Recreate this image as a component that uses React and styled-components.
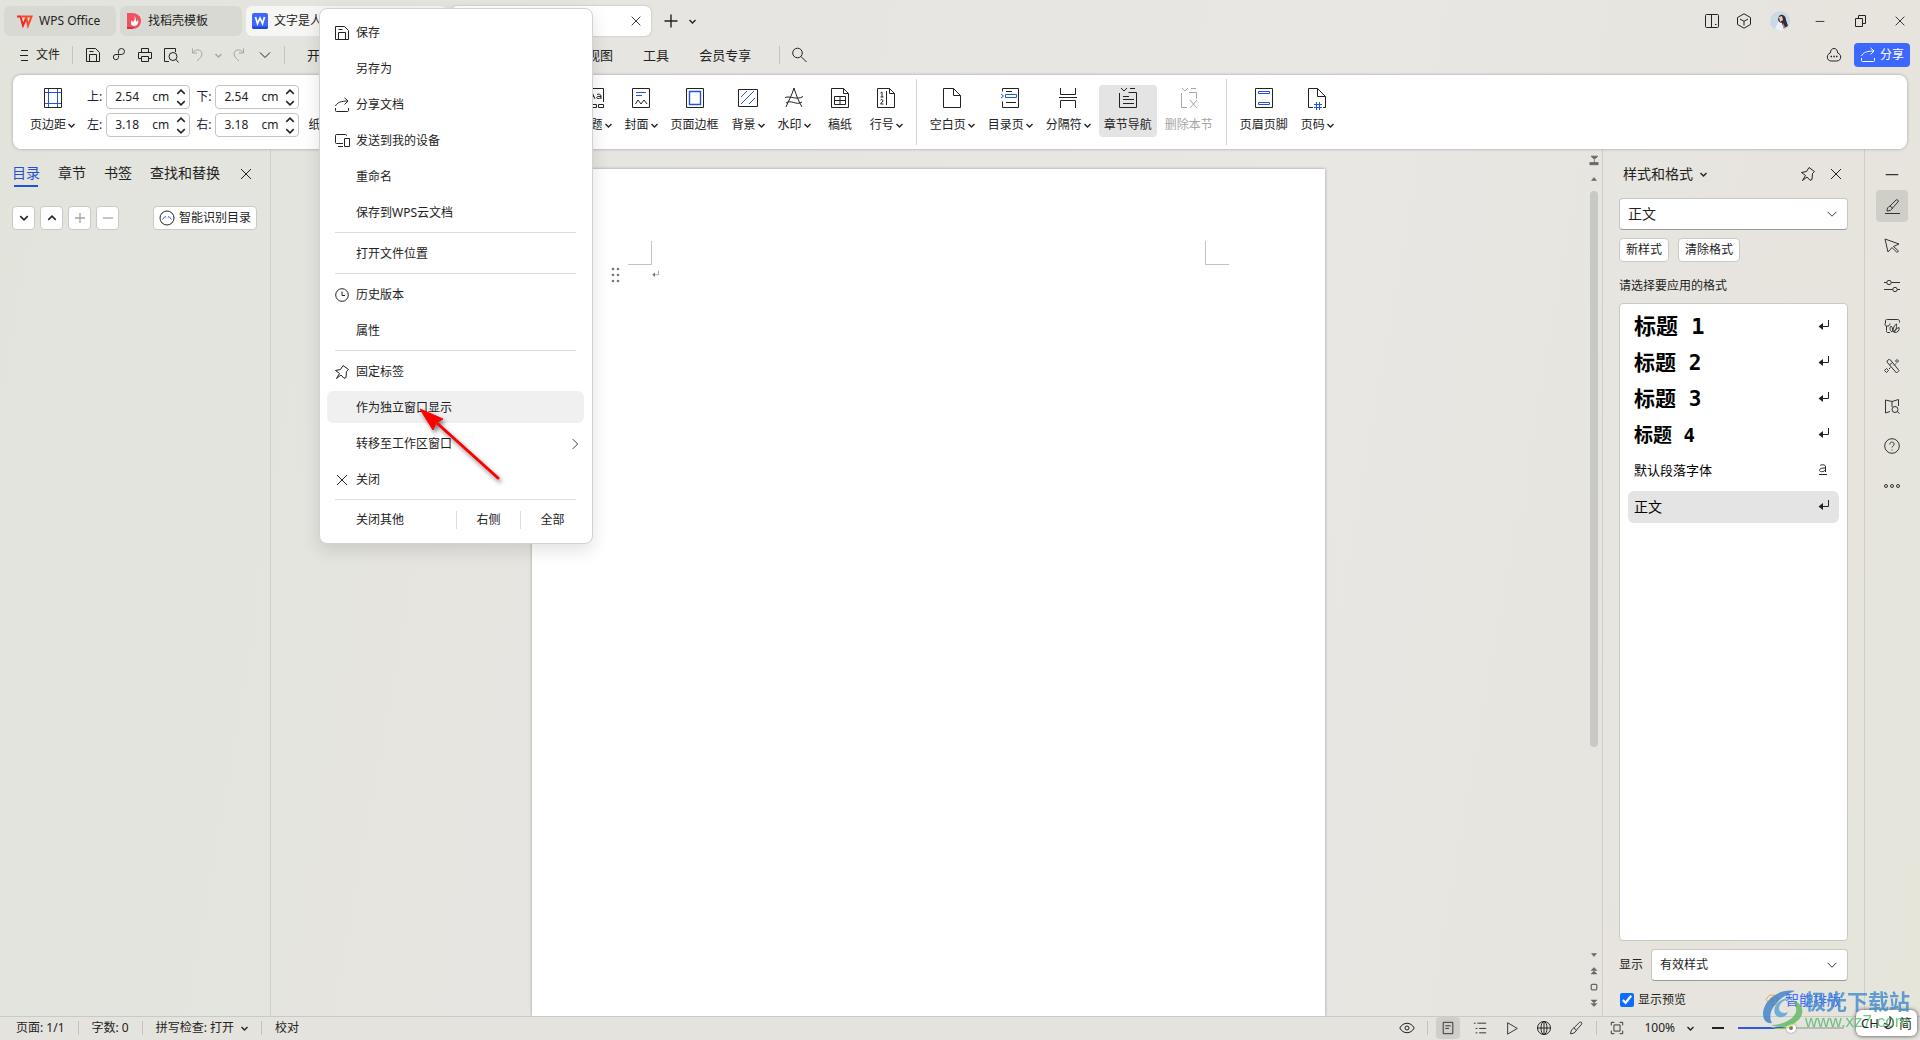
import { useState } from "react";
import styled, { createGlobalStyle, css } from "styled-components";

const icons = {
	wps: (
		<g strokeWidth="2" strokeLinejoin="miter">
			<path d="M0 3.500h3.500L6 12.500 9 5.500" stroke="#f0262a" />
			<path d="M4.500 3.500H9l2 9 3.500-9H9" stroke="#fb4a24" />
		</g>
	),
	docer: (
		<g stroke="none">
			<path d="M1 0h5c5 0 9 3 9 8s-4 8-9 8H1z" fill="#f05260" />
			<path d="M1 14h8l-3 2H1z" fill="#d5303f" />
			<path d="M8 3c2 3 0 5-1 6 0 0-1-1-1-2-2 3-1 6 2 6s5-3 4-6l-2 2c0-2 0-5-2-6z" fill="#fff" />
		</g>
	),
	writer: (
		<g>
			<rect width="16" height="16" rx="2" fill="#3d68ff" stroke="none" />
			<path d="M0 13.500h16v.5a2 2 0 0 1-2 2H2a2 2 0 0 1-2-2z" fill="#1e48d8" stroke="none" />
			<path d="M3.500 4l2 6.500L8 5l2.500 5.500 2-6.500" stroke="#fff" strokeWidth="1.700" />
		</g>
	),
	close: <path d="M3 3l10 10M13 3L3 13" />,
	plus: <path d="M8 1.500v13M1.500 8h13" strokeWidth="1.4" />,
	thinPlus: <path d="M8 3v10M3 8h10" strokeWidth="1.3" />,
	minus: <path d="M3 8h10" strokeWidth="1.3" />,
	dash: <path d="M3 8.500h10" />,
	thickMinus: <path d="M2 8h12" strokeWidth="2" />,
	restore: <path d="M3.500 5.500h7v8h-7zM6.500 5.500v-3h7v8h-3" />,
	down: <path d="M3 5.500l5 5 5-5" />,
	up: <path d="M3 10.500l5-5 5 5" />,
	right: <path d="M5.500 2.500L11 8l-5.500 5.500" />,
	lines: <path d="M3 3.500h7M2 8.500h8M3 13.500h7" />,
	save: <path d="M1.500 1.500h9l4 4v9h-13zM4.500 14.500v-7h7v7M4.500 4.500h4" />,
	link: <path d="M7.500 6.500V4.300a3 3 0 1 1 3 3.200H5a2.600 2.600 0 1 0 2.500 3V8.500" />,
	print: <path d="M4.500 5.500v-4h7v4M4.500 11.500h-3v-6h13v6h-3M4.500 9.500h7v5h-7z" />,
	preview: (
		<g>
			<path d="M6 14.500H1.500v-13h11V5" />
			<circle cx="10" cy="9.500" r="4" />
			<path d="M13 12.500l2.500 3" />
		</g>
	),
	undo: <path d="M3.500 1.500v4.500H8M3.500 6C7 1 13 2.500 13 7c0 3-3 5-5 7" />,
	redo: <path d="M12.500 1.500v4.500H8M12.500 6C9 1 3 2.500 3 7c0 3 3 5 5 7" />,
	search: (
		<g>
			<circle cx="6.500" cy="6" r="4.800" />
			<path d="M10 9.500l5.500 5.500" />
		</g>
	),
	sidePanel: <path d="M2.500 1.500h11a1 1 0 0 1 1 1v11a1 1 0 0 1-1 1h-11a1 1 0 0 1-1-1v-11a1 1 0 0 1 1-1zM7.500 2v12M11 11.500h1.500" />,
	cube: <path d="M8 .8L14.500 4.500v7L8 15.200 1.500 11.500v-7zM4 6L8 8.300 12 6M8 8.300v4.200" />,
	cloud: (
		<g>
			<path d="M4.300 6C4.500 3 6 1.500 8 1.500S11.500 3 11.700 6c2 .8 3 2.200 3 4 0 2.500-1.700 4-4 4H5.300c-2.300 0-4-1.500-4-4 0-1.800 1-3.200 3-4z" />
			<path d="M4.500 9.500h1.500M7.300 9.500h1.500M10 9.500h1.500" strokeWidth="1.500" />
		</g>
	),
	share: <path d="M1.500 9C3 5.500 7 4 14 4M10.500.8L14 4l-3.500 3.500M1.500 11v2.500a1 1 0 0 0 1 1h11a1 1 0 0 0 1-1V11" />,
	devices: <path d="M9 10.500H2.500a1 1 0 0 1-1-1v-7a1 1 0 0 1 1-1h9a1 1 0 0 1 1 1V3M4 13.500h5M10.500 5.500h5v8h-5z" />,
	clock: (
		<g>
			<circle cx="8" cy="8" r="6.300" />
			<path d="M8 4.500V8.500h3" />
		</g>
	),
	pin: <path d="M9 1.500l5.500 4-2 2-.5 6-2 .8L7 11l-4.500 3.500L5.500 9.500 1.500 6.500l5-1z" />,
	face: (
		<g>
			<circle cx="8" cy="8" r="7" />
			<path d="M3.500 9.500l2.500-3 1.200 1M12.500 9.500L10 6.500 8.800 7.500" stroke="#2a5bd8" />
		</g>
	),
	brush: <path d="M1 15.500h15M3 13c0-3 1-4 3-5l6-6c1-1 3 .5 2 2l-5.500 6C7.500 12 6 13 3 13zM6 8l3 2.500" />,
	cursor: <path d="M1 1l14 5-5.500 2.500 5 4.500-1.500 1.500-5-5L4 14z" />,
	sliders: (
		<g>
			<circle cx="5" cy="4.500" r="2.200" />
			<circle cx="11" cy="11.500" r="2.200" />
			<path d="M0 4.500h2.800M7.200 4.500H16M0 11.500h8.800M13.200 11.500H16" />
		</g>
	),
	gallery: <path d="M6 14.500H3.500c-1 0-1-1-1-2V8C1 8 .5 6 1.500 5V2.500c0-1 1-1 2-1h10c2 0 2 1 2 3M2.500 8c2 .5 3.500-.5 3.500-2.500M8 14c-3-2-2-5-1-6 2 2 2 4 1 6zm1.500 0c-1-4 1-7 3-8 0 4 0 6-3 8zm1 .5c0-3 2-4 4.500-5 .5 3-1 5-4.500 5z" />,
	tools: <path d="M3 4a2.200 2.200 0 0 1 3.500-2l8.500 10.500-2.500 2.500zM5.500 7L8.500 4.500M13 1.500l1.500 1.500L13 4.500 11.500 3zM12 5.500l-2 2M2.500 10.500l2 2-2 2-2-2zM5 11l1.500-1.500" />,
	book: (
		<g>
			<path d="M6 13.500L1.500 15V2L8 3.500 14.500 1.500V8M8 3.500V9" />
			<circle cx="11" cy="11.500" r="3" />
			<path d="M13.200 13.500l2.300 2" />
		</g>
	),
	help: (
		<g>
			<circle cx="8" cy="8" r="7.300" />
			<path d="M5.800 6.500C5.800 3 10.300 3.500 10.200 6.300 10 8 8 8 8 9.500M8 11.500v1" />
		</g>
	),
	more: (
		<g>
			<circle cx="2" cy="8" r="1.500" />
			<circle cx="8" cy="8" r="1.500" />
			<circle cx="14" cy="8" r="1.500" />
		</g>
	),
	enter: <path d="M13.500 1v6.500H5" />,
	letter: <path d="M5 2.500c1.500-1 5.500-1.500 5.500 1.500v5M10.500 5C7 5 4.500 5.500 4.500 7.300s4 2.200 6-.6M4 11.500h8" />,
	eye: (
		<g>
			<path d="M.8 8C4 1.700 12 1.700 15.200 8 12 14.300 4 14.300.8 8z" />
			<circle cx="8" cy="8" r="2" />
		</g>
	),
	page: <path d="M2.500 1.500h11v13h-11zM5 5.500h6M5 8.500h4" />,
	outline: <path d="M1 2.500h2M5 2.500h10M3 8.500h2M7 8.500h8M3 13.500h2M7 13.500h8" />,
	play: <path d="M3 2l11 6.500L3 15z" />,
	globe: (
		<g>
			<circle cx="8" cy="8" r="6.500" />
			<ellipse cx="8" cy="8" rx="3" ry="6.500" />
			<path d="M8 1.500v13M1.500 8h13" />
		</g>
	),
	pen: <path d="M1.500 14.500c1-1 .5-3 1.500-4.500l2.500-2L12 1.500c2-1.500 3 1 2.500 2L8.500 10.500C7 14 4 14.500 1.500 14.500zM5.500 8L8.500 10.500" />,
	fit: <path d="M1.500 5V1.500H5M11 1.500h3.500V5M14.500 11v3.500H11M5 14.500H1.500V11M4.500 4.500h7v7h-7z" />,
	hexS: <path d="M5 2.500h6l4 5-3 6H7M5 2.500L1 7.500l3 3M10 5.500H7l-1 1 4 2-1 1.500H6" />,
	triUp: <path d="M3 11l5-6 5 6z" fill="#666" />,
	triDown: <path d="M3 5l5 6 5-6z" fill="#666" />,
	dblUp: <path d="M2 7l6-6 6 6zM2 14l6-6 6 6z" fill="#666" />,
	dblDown: <path d="M2 2l6 6 6-6zM2 9l6 6 6-6z" fill="#666" />,
	ruler: <path d="M4 1.500h9l-3 3H7zM2.500 13v-3h11v3zM8.500 5v5" fill="#666" />,
	dot: <rect x="2.500" y="2.500" width="11" height="11" rx="2" strokeWidth="2.500" />,
};

const ribbonIcons = {
	margins: (
		<g>
			<path d="M3.500 2.500h17v19h-17z" />
			<path d="M7.500 3v18M16.500 3v18M4 6.500h16M4 17.500h16" stroke="#2354d8" />
		</g>
	),
	orient: <path d="M4.500 2.500h10v19h-10zM14.500 10.500h6v11h-6" />,
	size: <path d="M3.500 2.500h17v19h-17zM7.500 7v10M10 6.500h7" />,
	columns: <path d="M3.500 4.500h7M3.500 9.500h7M3.500 14.500h7M3.500 19.500h7M13.500 4.500h7M13.500 9.500h7M13.500 14.500h7M13.500 19.500h7" />,
	direction: <path d="M4.500 20.500l5-16 5 16M6.500 14.500h6M18.500 4v16M16.500 18l2 2 2-2" />,
	theme: (
		<g>
			<path d="M20.500 16V2.500h-17V16M8.500 18.500h5v3h-5zM15.500 18.500h5v3h-5zM3.500 18.500h3v3h-3z" />
			<path d="M6 13l3-7 3 7M7 10.500h4M14 8.500c2-1 4 0 4 1.500v3M18 10.500c-5-1-5 2-3 2 1 0 2 0 3-1" />
		</g>
	),
	cover: (
		<g>
			<path d="M3.500 2.500h17v19h-17zM6.500 18l2.500-4 3 4 3-4 3 4" />
			<path d="M7 6.500h10M7 9.500h6" stroke="#2354d8" />
		</g>
	),
	border: (
		<g>
			<path d="M3.500 2.500h17v19h-17z" />
			<path d="M6.500 5.500h11v13h-11z" stroke="#2354d8" strokeWidth="1.400" />
		</g>
	),
	background: (
		<g>
			<path d="M2.500 3.500h19v17h-19z" />
			<path d="M5 11l6-6M5 18L18 5M13 18l6-6" stroke="#2354d8" />
		</g>
	),
	watermark: <path d="M4 21c2-5 6-12 8-19 2 7 5 14 8 19M3 11.500c5-2 12 3 18-1M4 17c5-4 10 3 16-1" />,
	grid: <path d="M3.500 2.500h12l5 5v14h-17zM15.500 2.500v5h5M6.500 10.500h11v8h-11zM6.500 14.500h11M12 10.500v8" />,
	lineNo: <path d="M3.500 2.500h12l5 5v14h-17zM15.500 2.500v5h5M12.500 5v14M6.500 7l1.500-1v5M6.500 11h3M6.500 14c1-1 2.500-.5 2.500 1l-2.500 3h3" />,
	blank: <path d="M3.500 2.500h10l7 7v12h-17zM13.500 2.500v7h7" />,
	toc: (
		<g>
			<path d="M4.500 5.500v-3h16v19h-16v-6M8 5.500h6M8 16.500h10" />
			<path d="M7.500 8.500h11v3h-11zM3 8l2.500 2L3 12" stroke="#2354d8" />
		</g>
	),
	breaks: <path d="M4.500 2v6.500h15V2M3 11.500h18M4.500 22v-7.500h15V22" />,
	nav: <path d="M5 2l3 3 3-3M14 2.500h5M3.500 7v14.500h17v-15h-8M7 10.500h6M7 13.500h11M7 17.500h11" />,
	removeSection: <path d="M5 2l3 3 3-3M14 2.500h5M12 6.500h7.500v6M4.500 7v14.500H10M13 14l7 8M20 14l-7 8" />,
	headerFooter: (
		<g>
			<path d="M3.500 2.500h17v19h-17z" />
			<path d="M6.500 5.500h11v2h-11zM6.500 16.500h11v2h-11z" stroke="#2354d8" />
		</g>
	),
	pageNo: (
		<g>
			<path d="M8 21.500H3.500v-19h9l8 8v11H18M12.500 2.500v8h8" />
			<path d="M11.500 16v8M14.500 16v8M9 18.500h8M9 21.500h8" stroke="#2354d8" />
		</g>
	),
};

const Icon = ({ name, size = 16 }) => (
	<Svg $size={size} viewBox="0 0 16 16" aria-hidden="true">
		{icons[name]}
		{name === "enter" && <path d="M8 4v7L3.500 7.500z" fill="currentColor" stroke="none" />}
	</Svg>
);

const quickTools = ["save", "link", "print", "preview"];
const ribbonTabs = ["开始", "插入", "页面", "引用", "审阅", "视图", "工具", "会员专享"];

const paperGroup = [
	{ icon: "orient", label: "纸张方向", menu: true },
	{ icon: "size", label: "纸张大小", menu: true },
	{ icon: "columns", label: "分栏", menu: true },
	{ icon: "direction", label: "文字方向", menu: true },
];
const themeGroup = [
	{ icon: "theme", label: "主题", menu: true },
	{ icon: "cover", label: "封面", menu: true },
	{ icon: "border", label: "页面边框" },
	{ icon: "background", label: "背景", menu: true },
	{ icon: "watermark", label: "水印", menu: true },
	{ icon: "grid", label: "稿纸" },
	{ icon: "lineNo", label: "行号", menu: true },
];
const sectionGroup = [
	{ icon: "blank", label: "空白页", menu: true },
	{ icon: "toc", label: "目录页", menu: true },
	{ icon: "breaks", label: "分隔符", menu: true },
	{ icon: "nav", label: "章节导航", active: true },
	{ icon: "removeSection", label: "删除本节", disabled: true },
];
const headerGroup = [
	{ icon: "headerFooter", label: "页眉页脚" },
	{ icon: "pageNo", label: "页码", menu: true },
];

const tabMenu = [
	{ icon: "save", label: "保存" },
	{ label: "另存为" },
	{ icon: "share", label: "分享文档" },
	{ icon: "devices", label: "发送到我的设备" },
	{ label: "重命名" },
	{ label: "保存到WPS云文档" },
	null,
	{ label: "打开文件位置" },
	null,
	{ icon: "clock", label: "历史版本" },
	{ label: "属性" },
	null,
	{ icon: "pin", label: "固定标签" },
	{ label: "作为独立窗口显示", active: true },
	{ label: "转移至工作区窗口", sub: true },
	{ icon: "close", label: "关闭" },
	null,
];

const styleList = [
	{ name: "标题 1", size: 22, weight: 600, mark: "enter" },
	{ name: "标题 2", size: 21, weight: 700, mark: "enter" },
	{ name: "标题 3", size: 21, weight: 600, mark: "enter" },
	{ name: "标题 4", size: 19, weight: 700, mark: "enter" },
	{ name: "默认段落字体", size: 13, weight: 400, mark: "letter" },
	{ name: "正文", size: 14, weight: 400, mark: "enter", active: true },
];

const sideTools = ["brush", "cursor", "sliders", "gallery", "tools", "book", "help", "more"];

const RibbonItem = ({ item }) => (
	<RibbonButton $active={item.active} disabled={item.disabled}>
		<Svg $size={24} viewBox="0 0 24 24" aria-hidden="true">
			{ribbonIcons[item.icon]}
		</Svg>
		<RibbonLabel>
			{item.label}
			{item.menu && <Caret />}
		</RibbonLabel>
	</RibbonButton>
);

const RibbonGroup = ({ items }) => (
	<Group>
		{items.map((item) => (
			<RibbonItem key={item.label} item={item} />
		))}
	</Group>
);

const Caret = () => (
	<CaretSvg viewBox="0 0 7 5" aria-hidden="true">
		<path d="M.5 1l3 3 3-3" />
	</CaretSvg>
);

const MarginField = ({ label, start }) => {
	const [value, setValue] = useState(start);
	const step = (by) => setValue((Number(value) + by).toFixed(2));
	return (
		<FieldLabel>
			{label}:
			<Spin>
				<SpinInput value={value} onChange={(e) => setValue(e.target.value)} />
				<Unit>cm</Unit>
				<SpinButtons>
					<SpinButton aria-label="增加" onClick={() => step(0.1)}>
						<Icon name="up" size={12} />
					</SpinButton>
					<SpinButton aria-label="减少" onClick={() => step(-0.1)}>
						<Icon name="down" size={12} />
					</SpinButton>
				</SpinButtons>
			</Spin>
		</FieldLabel>
	);
};

const TabMenu = () => (
	<Menu>
		{tabMenu.map((item, i) =>
			item ? (
				<MenuItem key={item.label} $active={item.active}>
					<MenuIcon>{item.icon && <Icon name={item.icon} />}</MenuIcon>
					<MenuText>{item.label}</MenuText>
					{item.sub && <Icon name="right" size={14} />}
				</MenuItem>
			) : (
				<MenuRule key={i} />
			)
		)}
		<MenuFooter>
			<FooterButton $first>关闭其他</FooterButton>
			<FooterButton>右侧</FooterButton>
			<FooterButton>全部</FooterButton>
		</MenuFooter>
	</Menu>
);

const App = () => {
	const [zoom, setZoom] = useState(50);
	const [preview, setPreview] = useState(true);
	return (
		<Window>
			<GlobalStyle />
			<TitleBar>
				<FileTab $width={112} $pad={13}>
					<Icon name="wps" />
					<span>WPS Office</span>
				</FileTab>
				<FileTab $width={122} $pad={6}>
					<Icon name="docer" />
					<span>找稻壳模板</span>
				</FileTab>
				<FileTab $width={201} $pad={6} $tone="light">
					<Icon name="writer" />
					<span>文字是人类用符号</span>
				</FileTab>
				<FileTab $width={200} $pad={6} $tone="white">
					<Icon name="writer" />
					<TabName>文字文稿1</TabName>
					<Icon name="close" size={14} />
				</FileTab>
				<IconButton $width={32} aria-label="新建">
					<Icon name="plus" />
				</IconButton>
				<IconButton $width={10} aria-label="标签列表">
					<Caret />
				</IconButton>
				<Spacer />
				<IconButton $width={32} aria-label="侧栏">
					<Icon name="sidePanel" />
				</IconButton>
				<IconButton $width={32} aria-label="应用">
					<Icon name="cube" />
				</IconButton>
				<IconButton $width={40} aria-label="账号">
					<svg width="20" height="20" viewBox="0 0 20 20">
						<circle cx="10" cy="10" r="10" fill="#cbd9e6" />
						<path d="M9 5c3-3 7 0 7 4l2 6-4 2-4-5-2-3z" fill="#332b38" />
						<path d="M9 6l3-1 1 4-3 2z" fill="#edc9bc" />
						<path d="M5 18l3-7 4 1 2 7-4 1z" fill="#e8f1f5" />
						<path d="M13 12l2 4-2 2z" fill="#c68a8a" />
					</svg>
				</IconButton>
				<IconButton $width={40} aria-label="最小化">
					<Icon name="dash" size={14} />
				</IconButton>
				<IconButton $width={40} aria-label="还原">
					<Icon name="restore" />
				</IconButton>
				<IconButton $width={40} aria-label="关闭">
					<Icon name="close" size={14} />
				</IconButton>
			</TitleBar>

			<CommandBar>
				<FileButton>
					<Icon name="lines" />
					文件
				</FileButton>
				<BarRule $left={12} $right={7} />
				{quickTools.map((name) => (
					<IconButton key={name} $width={26} aria-label={name}>
						<Icon name={name} />
					</IconButton>
				))}
				<IconButton $width={26} disabled aria-label="撤销">
					<Icon name="undo" />
				</IconButton>
				<IconButton $width={16} disabled aria-label="撤销列表">
					<Caret />
				</IconButton>
				<IconButton $width={26} disabled aria-label="恢复">
					<Icon name="redo" />
				</IconButton>
				<IconButton $width={26} aria-label="更多">
					<Icon name="down" />
				</IconButton>
				<BarRule $left={6} $right={22} />
				<RibbonTabs>
					{ribbonTabs.map((tab) => (
						<RibbonTab key={tab}>{tab}</RibbonTab>
					))}
				</RibbonTabs>
				<BarRule $left={28} $right={7} />
				<IconButton $width={24} aria-label="搜索">
					<Icon name="search" />
				</IconButton>
				<Spacer />
				<IconButton $width={40} aria-label="云">
					<Icon name="cloud" />
				</IconButton>
				<ShareButton>
					<Icon name="share" />
					分享
				</ShareButton>
			</CommandBar>

			<Ribbon>
				<RibbonItem item={{ icon: "margins", label: "页边距", menu: true }} />
				<MarginGrid>
					<MarginField label="上" start="2.54" />
					<MarginField label="下" start="2.54" />
					<MarginField label="左" start="3.18" />
					<MarginField label="右" start="3.18" />
				</MarginGrid>
				<RibbonGroup items={paperGroup} />
				<RibbonRule />
				<RibbonGroup items={themeGroup} />
				<RibbonRule />
				<RibbonGroup items={sectionGroup} />
				<RibbonRule />
				<RibbonGroup items={headerGroup} />
			</Ribbon>

			<Main>
				<NavPanel>
					<NavTabs>
						<NavTab $active>目录</NavTab>
						<NavTab>章节</NavTab>
						<NavTab>书签</NavTab>
						<NavTab>查找和替换</NavTab>
						<PanelClose aria-label="关闭导航">
							<Icon name="close" />
						</PanelClose>
					</NavTabs>
					<NavTools>
						<SquareButton aria-label="展开">
							<Icon name="down" size={12} />
						</SquareButton>
						<SquareButton aria-label="收起">
							<Icon name="up" size={12} />
						</SquareButton>
						<SquareButton disabled aria-label="升级">
							<Icon name="thinPlus" />
						</SquareButton>
						<SquareButton disabled aria-label="降级">
							<Icon name="minus" />
						</SquareButton>
						<Spacer />
						<SmallButton>
							<Icon name="face" />
							智能识别目录
						</SmallButton>
					</NavTools>
				</NavPanel>

				<Workspace>
					<Paper>
						<Corners>
							<Corner $side="left" />
							<Corner $side="right" />
						</Corners>
						<Paragraph>
							<svg width="9" height="16" viewBox="0 0 9 16" fill="#777">
								<circle cx="2" cy="2" r="1.300" />
								<circle cx="7" cy="2" r="1.300" />
								<circle cx="2" cy="8" r="1.300" />
								<circle cx="7" cy="8" r="1.300" />
								<circle cx="2" cy="14" r="1.300" />
								<circle cx="7" cy="14" r="1.300" />
							</svg>
							<Icon name="enter" size={10} />
						</Paragraph>
					</Paper>
				</Workspace>

				<ScrollBar>
					<Icon name="ruler" size={12} />
					<Icon name="triUp" size={8} />
					<Track>
						<Thumb />
					</Track>
					<Icon name="triDown" size={8} />
					<Icon name="dblUp" size={8} />
					<Icon name="dot" size={8} />
					<Icon name="dblDown" size={8} />
				</ScrollBar>

				<StylePanel>
					<PanelHead>
						<PanelTitle>
							样式和格式
							<Caret />
						</PanelTitle>
						<Icon name="pin" />
						<Icon name="close" />
					</PanelHead>
					<SelectBox $size={14}>
						<select aria-label="当前样式" defaultValue="正文">
							<option>正文</option>
						</select>
						<Icon name="down" size={14} />
					</SelectBox>
					<StyleActions>
						<SmallButton>新样式</SmallButton>
						<SmallButton>清除格式</SmallButton>
					</StyleActions>
					<Hint>请选择要应用的格式</Hint>
					<StyleBox>
						{styleList.map((s) => (
							<StyleRow key={s.name} $active={s.active}>
								<StyleName $size={s.size} $weight={s.weight}>
									{s.name}
								</StyleName>
								<Icon name={s.mark} />
							</StyleRow>
						))}
					</StyleBox>
					<ShowRow>
						<label htmlFor="show">显示</label>
						<SelectBox $size={12}>
							<select id="show" defaultValue="有效样式">
								<option>有效样式</option>
							</select>
							<Icon name="down" size={14} />
						</SelectBox>
					</ShowRow>
					<PreviewRow>
						<CheckLabel>
							<CheckBox
								type="checkbox"
								checked={preview}
								onChange={(e) => setPreview(e.target.checked)}
							/>
							显示预览
						</CheckLabel>
						<SmartLink href="#layout">
							<Icon name="hexS" size={14} />
							智能排版
						</SmartLink>
					</PreviewRow>
				</StylePanel>

				<SideBar>
					<SideButton $short aria-label="收起侧栏">
						<Icon name="dash" size={20} />
					</SideButton>
					{sideTools.map((name, i) => (
						<SideButton key={name} $active={i === 0} aria-label={name}>
							<Icon name={name} />
						</SideButton>
					))}
				</SideBar>
			</Main>

			<StatusBar>
				<StatusText>页面: 1/1</StatusText>
				<StatusRule />
				<StatusText>字数: 0</StatusText>
				<StatusRule />
				<StatusText>
					拼写检查: 打开
					<Caret />
				</StatusText>
				<StatusRule />
				<StatusText>校对</StatusText>
				<Spacer />
				<ViewButton aria-label="护眼模式">
					<Icon name="eye" />
				</ViewButton>
				<StatusRule $tight />
				<ViewButton $active aria-label="页面视图">
					<Icon name="page" size={14} />
				</ViewButton>
				<ViewButton aria-label="大纲">
					<Icon name="outline" size={14} />
				</ViewButton>
				<ViewButton aria-label="阅读版式">
					<Icon name="play" size={14} />
				</ViewButton>
				<ViewButton aria-label="Web版式">
					<Icon name="globe" />
				</ViewButton>
				<ViewButton aria-label="写作模式">
					<Icon name="pen" size={14} />
				</ViewButton>
				<StatusRule $tight />
				<ViewButton aria-label="适应页面">
					<Icon name="fit" size={14} />
				</ViewButton>
				<ZoomButton>
					100%
					<Caret />
				</ZoomButton>
				<ZoomStep aria-label="缩小">
					<Icon name="thickMinus" />
				</ZoomStep>
				<ZoomSlider
					type="range"
					aria-label="缩放"
					value={zoom}
					onChange={(e) => setZoom(e.target.value)}
				/>
			</StatusBar>

			<TabMenu />

			<Pointer width="110" height="100" viewBox="0 0 110 100" aria-hidden="true">
				<path d="M88 77L28 23" stroke="#f00" strokeWidth="3" strokeLinecap="round" />
				<path d="M10 8l23 10-7 4-3 7z" fill="#f00" stroke="#f00" strokeLinejoin="round" />
			</Pointer>

			<ImeBar>
				CH
				<svg width="12" height="14" viewBox="0 0 12 14" fill="none" stroke="#333" strokeWidth="1.300">
					<path d="M7 1c4 3 5 9 0 11-2 1-4 0-5-1 4 0 6-4 5-10zM1 7l4 2" />
				</svg>
				简
			</ImeBar>

			<SiteMark>
				<svg width="44" height="42" viewBox="0 0 44 42" aria-hidden="true">
					<path d="M34 2C17-1 2 12 2 25c0 6 4 10 9 9C5 24 16 8 34 2z" fill="#397fc9" />
					<path d="M31 9C18 8 11 18 14 25c3 5 11 4 13-2-7 3-11-2-8-7 2-4 7-6 12-7z" fill="#51a3da" />
					<path d="M31 11c12 3 14 15 4 22-8 6-18 6-25 3 12 0 23-6 25-13 1-5-1-9-4-12z" fill="#5cb85f" />
					<path d="M8 37c10 4 21 2 28-5-4 7-16 12-28 5z" fill="#c2d640" />
				</svg>
				<div>
					<SiteName>极光下载站</SiteName>
					<SiteUrl>www.xz7.com</SiteUrl>
				</div>
			</SiteMark>
		</Window>
	);
};

export default App;

const GlobalStyle = createGlobalStyle`
	* {
		box-sizing: border-box;
	}
	body {
		margin: 0;
		font-family: "Noto Sans", "Noto Sans CJK SC", sans-serif;
		font-size: 12px;
		line-height: 16px;
		color: #222;
	}
	button, input, select {
		font: inherit;
		color: inherit;
	}
	button {
		padding: 0;
		border: none;
		background: none;
		white-space: nowrap;
	}
	button:disabled {
		color: #a6a6a3;
	}
`;

const Window = styled.div`
	position: relative;
	display: flex;
	flex-direction: column;
	height: 100vh;
	overflow: hidden;
	background: linear-gradient(100deg, #e2e4dc 0%, #e7e5e1 35%, #e8e7e3 65%, #e7e4de 88%, #e5e5da 100%);
`;

const Svg = styled.svg`
	flex: none;
	width: ${(p) => p.$size}px;
	height: ${(p) => p.$size}px;
	fill: none;
	stroke: currentColor;
	stroke-width: 1;
`;

const CaretSvg = styled.svg`
	flex: none;
	width: 7px;
	height: 5px;
	fill: none;
	stroke: currentColor;
	stroke-width: 1.4;
`;

const Spacer = styled.div`
	flex: 1;
`;

const TitleBar = styled.header`
	display: flex;
	align-items: center;
	height: 36px;
	padding: 6px 0 0 4px;
`;

const tabTones = {
	light: "#f6f6f4",
	white: "#fff",
};

const FileTab = styled.button`
	display: flex;
	align-items: center;
	gap: 6px;
	width: ${(p) => p.$width}px;
	height: 30px;
	margin-right: 4px;
	padding: 0 8px 0 ${(p) => p.$pad}px;
	border-radius: 6px;
	background: ${(p) => tabTones[p.$tone] || "#d8d9d2"};
	${(p) => p.$tone === "white" && css`box-shadow: 0 0 2px #aaa;`}
`;

const TabName = styled.span`
	flex: 1;
	text-align: left;
`;

const IconButton = styled.button`
	display: flex;
	align-items: center;
	justify-content: center;
	width: ${(p) => p.$width}px;
	height: 26px;
`;

const CommandBar = styled.div`
	display: flex;
	align-items: center;
	height: 38px;
	padding: 0 10px 0 18px;
`;

const FileButton = styled.button`
	display: flex;
	align-items: center;
	gap: 2px;
`;

const BarRule = styled.div`
	width: 1px;
	height: 18px;
	margin: 0 ${(p) => p.$right}px 0 ${(p) => p.$left}px;
	background: #c4c4be;
`;

const RibbonTabs = styled.nav`
	display: flex;
	gap: 30px;
`;

const RibbonTab = styled.button`
	font-size: 13px;
`;

const ShareButton = styled.button`
	display: flex;
	align-items: center;
	justify-content: center;
	gap: 4px;
	width: 56px;
	height: 24px;
	border-radius: 4px;
	background: #3d68ff;
	color: #fff;
`;

const Ribbon = styled.section`
	display: flex;
	flex: none;
	height: 74px;
	margin: 1px 13px 0;
	padding: 10px 12px;
	border-radius: 8px;
	background: #fff;
	box-shadow: 0 0 3px #999;
	z-index: 1;
`;

const Group = styled.div`
	display: flex;
	gap: 3px;
`;

const RibbonButton = styled.button`
	display: flex;
	flex: none;
	flex-direction: column;
	align-items: center;
	gap: 7px;
	min-width: 43px;
	height: 52px;
	padding: 1px 5px 0;
	border-radius: 4px;
	background: ${(p) => (p.$active ? "#e4e4e4" : "none")};
`;

const RibbonLabel = styled.span`
	display: flex;
	align-items: center;
	gap: 2px;
`;

const RibbonRule = styled.div`
	width: 1px;
	height: 66px;
	margin: -6px 8px 0;
	background: #d4d4d4;
`;

const MarginGrid = styled.div`
	display: grid;
	grid-template-columns: auto auto;
	grid-auto-rows: 24px;
	gap: 4px 6px;
	margin: 0 4px 0 7px;
`;

const FieldLabel = styled.label`
	display: flex;
	align-items: center;
	gap: 4px;
	color: #1d2340;
`;

const Spin = styled.span`
	display: flex;
	align-items: center;
	width: 84px;
	height: 24px;
	padding: 0 2px 0 8px;
	border: 1px solid #c4c4c4;
	border-radius: 4px;
	color: #222;
`;

const SpinInput = styled.input`
	width: 37px;
	padding: 0;
	border: none;
	outline: none;
	background: none;
	font-size: 12px;
`;

const Unit = styled.span`
	flex: 1;
`;

const SpinButtons = styled.span`
	display: flex;
	flex-direction: column;
`;

const SpinButton = styled.button`
	display: flex;
	height: 11px;
	align-items: center;

	svg {
		stroke-width: 2;
	}
`;

const Main = styled.main`
	display: flex;
	flex: 1;
	min-height: 0;
`;

const NavPanel = styled.aside`
	width: 271px;
	padding: 14px 13px 0 12px;
	border-right: 1px solid #cfcfca;
`;

const NavTabs = styled.div`
	display: flex;
	align-items: flex-start;
	gap: 18px;
	height: 43px;
`;

const NavTab = styled.button`
	position: relative;
	height: 24px;
	padding-bottom: 4px;
	font-size: 14px;
	color: ${(p) => (p.$active ? "#2450d8" : "#222")};
	${(p) =>
		p.$active &&
		css`
			&::after {
				content: "";
				position: absolute;
				left: 2px;
				right: 2px;
				bottom: 0;
				height: 2px;
				background: #2450d8;
			}
		`}
`;

const PanelClose = styled.button`
	display: flex;
	align-items: center;
	height: 22px;
`;

const NavTools = styled.div`
	display: flex;
	gap: 5px;
`;

const buttonFrame = css`
	display: flex;
	align-items: center;
	justify-content: center;
	height: 24px;
	border: 1px solid #c9c9c5;
	border-radius: 4px;
	background: #fff;
`;

const SquareButton = styled.button`
	${buttonFrame}
	width: 23px;
	svg {
		stroke-width: 2;
	}
`;

const SmallButton = styled.button`
	${buttonFrame}
	gap: 4px;
	padding: 0 5px;
`;

const Workspace = styled.section`
	display: flex;
	flex: 1;
	justify-content: center;
	padding-top: 20px;
`;

const Paper = styled.article`
	width: 793px;
	background: #fff;
	box-shadow: 0 0 3px #999;
`;

const Corners = styled.div`
	display: flex;
	justify-content: space-between;
	padding: 72px 96px 0;
`;

const Corner = styled.div`
	width: 24px;
	height: 24px;
	border: 0 solid #c2c2c2;
	border-bottom-width: 1px;
	${(p) => (p.$side === "left" ? "border-right-width: 1px;" : "border-left-width: 1px;")}
`;

const Paragraph = styled.div`
	display: flex;
	align-items: center;
	gap: 30px;
	padding: 2px 0 0 79px;
	color: #777;
`;

const ScrollBar = styled.div`
	display: flex;
	flex-direction: column;
	align-items: center;
	gap: 8px;
	width: 17px;
	padding: 6px 0 9px;
	color: #666;
`;

const Track = styled.div`
	flex: 1;
	width: 8px;
`;

const Thumb = styled.div`
	height: 74%;
	border-radius: 4px;
	background: #c8c8c5;
`;

const StylePanel = styled.aside`
	display: flex;
	flex-direction: column;
	width: 262px;
	padding: 15px 16px 6px;
	border-left: 1px solid #cfcfca;
`;

const PanelHead = styled.div`
	display: flex;
	align-items: center;
	gap: 12px;
	height: 20px;
	margin-bottom: 14px;
	padding: 0 4px;
`;

const PanelTitle = styled.div`
	display: flex;
	flex: 1;
	align-items: center;
	gap: 7px;
	font-size: 14px;
`;

const SelectBox = styled.div`
	display: grid;
	flex: 1 0 auto;
	align-items: center;
	height: 32px;
	max-height: 32px;
	border: 1px solid #c6c6c2;
	border-bottom-color: #999;
	border-radius: 4px;
	background: #fff;

	select,
	svg {
		grid-area: 1 / 1;
	}
	select {
		height: 30px;
		padding: 0 8px;
		border: none;
		appearance: none;
		background: none;
		font-size: ${(p) => p.$size}px;
	}
	svg {
		justify-self: end;
		margin-right: 8px;
		pointer-events: none;
	}
`;

const StyleActions = styled.div`
	display: flex;
	gap: 9px;
	margin-top: 8px;

	button {
		padding: 0 6px;
	}
`;

const Hint = styled.p`
	margin: 16px 0 9px;
`;

const StyleBox = styled.div`
	display: flex;
	flex: 1000;
	flex-direction: column;
	gap: 4px;
	padding: 7px 8px;
	border: 1px solid #c9c9c5;
	border-radius: 4px;
	background: #fff;
`;

const StyleRow = styled.button`
	display: flex;
	align-items: center;
	justify-content: space-between;
	height: 32px;
	padding: 0 8px 0 6px;
	border-radius: 6px;
	background: ${(p) => (p.$active ? "#e4e4e4" : "none")};
`;

const StyleName = styled.span`
	font-family: "DejaVu Sans Mono", "Noto Sans CJK SC", monospace;
	font-size: ${(p) => p.$size}px;
	font-weight: ${(p) => p.$weight};
	line-height: 28px;
	white-space: pre;
	color: #000;
`;

const ShowRow = styled.div`
	display: flex;
	align-items: center;
	gap: 8px;
	margin-top: 8px;
`;

const PreviewRow = styled.div`
	display: flex;
	align-items: center;
	justify-content: space-between;
	height: 20px;
	margin-top: 9px;
	padding-right: 7px;
`;

const CheckLabel = styled.label`
	display: flex;
	align-items: center;
	gap: 4px;
`;

const CheckBox = styled.input`
	width: 14px;
	height: 14px;
	margin: 0 0 0 1px;
	accent-color: #0b6cff;
`;

const SmartLink = styled.a`
	display: flex;
	align-items: center;
	gap: 6px;
	font-size: 14px;
	color: #3d68ff;
	text-decoration: none;

	svg {
		color: #f0a020;
	}
`;

const SideBar = styled.aside`
	display: flex;
	flex-direction: column;
	align-items: center;
	gap: 8px;
	width: 56px;
	padding: 17px 1px 0 0;
	border-left: 1px solid #cfcfca;
`;

const SideButton = styled.button`
	display: flex;
	align-items: center;
	justify-content: center;
	width: 32px;
	height: ${(p) => (p.$short ? 16 : 32)}px;
	border-radius: 4px;
	background: ${(p) => (p.$active ? "#cfcfc8" : "none")};
	color: #333;
`;

const StatusBar = styled.footer`
	display: flex;
	flex: none;
	align-items: center;
	height: 24px;
	padding: 0 76px 1px 16px;
	border-top: 1px solid #c9c9c5;
	background: #e5e3de;
`;

const StatusText = styled.span`
	display: flex;
	align-items: center;
	gap: 7px;
`;

const StatusRule = styled.div`
	width: 1px;
	height: 14px;
	margin: 0 ${(p) => (p.$tight ? 8 : 13)}px;
	background: #c4c4be;
`;

const ViewButton = styled.button`
	display: flex;
	align-items: center;
	justify-content: center;
	width: 24px;
	height: 22px;
	border-radius: 4px;
	background: ${(p) => (p.$active ? "#cfcec8" : "none")};

	& + & {
		margin-left: 8px;
	}
`;

const ZoomButton = styled.button`
	display: flex;
	align-items: center;
	gap: 12px;
	margin: 0 16px 0 15px;
`;

const ZoomStep = styled.button`
	display: flex;
	margin-right: 12px;
`;

const ZoomSlider = styled.input`
	width: 106px;
	height: 12px;
	margin: 0;
	appearance: none;
	background: linear-gradient(to right, #2f57e0 50%, #b9b9b5 50%) center / 100% 2px no-repeat;

	&::-webkit-slider-thumb {
		appearance: none;
		width: 10px;
		height: 10px;
		border: 3px solid #fff;
		border-radius: 50%;
		background: #777;
		box-shadow: 0 0 2px #777;
	}
`;

const Menu = styled.div`
	position: absolute;
	top: 8px;
	left: 319px;
	z-index: 2;
	display: flex;
	flex-direction: column;
	gap: 4px;
	width: 274px;
	padding: 7px 8px 7px 7px;
	border: 1px solid #d2d2d2;
	border-radius: 8px;
	background: #fff;
	box-shadow: 0 6px 18px rgba(0, 0, 0, 0.12);
`;

const MenuItem = styled.button`
	display: flex;
	align-items: center;
	gap: 6px;
	height: 32px;
	padding: 1px 2px 0 7px;
	border-radius: 6px;
	background: ${(p) => (p.$active ? "#f0f0f0" : "none")};
`;

const MenuIcon = styled.span`
	display: flex;
	width: 16px;
`;

const MenuText = styled.span`
	flex: 1;
	text-align: left;
`;

const MenuRule = styled.div`
	height: 1px;
	margin: 0 8px;
	background: #dedede;
`;

const MenuFooter = styled.div`
	display: flex;
	align-items: center;
	height: 32px;
`;

const FooterButton = styled.button`
	width: 64px;
	height: 18px;

	${(p) =>
		p.$first &&
		css`
			flex: 1;
			padding-left: 29px;
			text-align: left;
		`}

	& + & {
		border-left: 1px solid #dedede;
	}
`;

const Pointer = styled.svg`
	position: absolute;
	top: 401px;
	left: 410px;
	z-index: 3;
	filter: drop-shadow(2px 3px 2px rgba(0, 0, 0, 0.5));
`;

const ImeBar = styled.div`
	position: absolute;
	right: 3px;
	bottom: 4px;
	z-index: 2;
	display: flex;
	align-items: center;
	justify-content: center;
	gap: 4px;
	width: 61px;
	height: 26px;
	border-radius: 6px;
	background: #fff;
	box-shadow: 0 0 4px #444;
	font-size: 13px;
`;

const SiteMark = styled.div`
	position: absolute;
	right: 10px;
	bottom: 9px;
	z-index: 3;
	display: flex;
	align-items: center;
	opacity: 0.8;
	pointer-events: none;
`;

const SiteName = styled.div`
	font-size: 21px;
	font-weight: 700;
	line-height: 24px;
	color: #3f8ad0;
`;

const SiteUrl = styled.div`
	font-family: "Liberation Sans", Arial, sans-serif;
	font-size: 17px;
	line-height: 18px;
	color: #4cb868;
`;
